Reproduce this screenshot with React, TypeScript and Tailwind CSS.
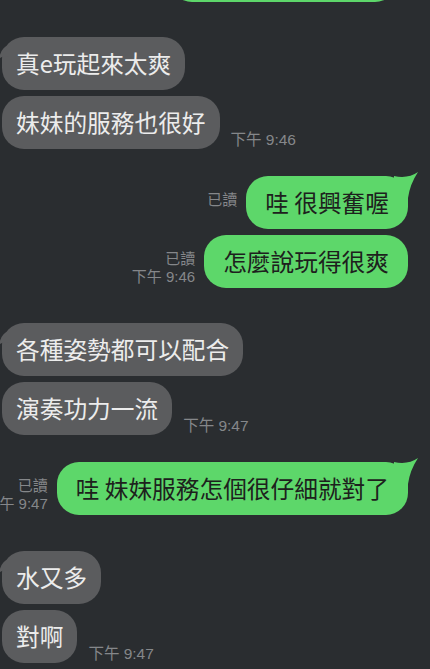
import React from "react";

const CJK = '"Noto Sans CJK TC", "Noto Sans CJK SC", sans-serif';
const META = '"Liberation Sans", "Noto Sans CJK TC", sans-serif';

function GreenTail() {
  return (
    <svg className="absolute -right-[10px] -top-[4px]" width="24" height="26" viewBox="0 0 24 26">
      <path d="M0 4 Q14 7 24 0 Q16 12 14 26 L0 26 Z" fill="#5dd76a" />
    </svg>
  );
}

function GrayTail() {
  return (
    <svg className="absolute -left-[3px] top-[8px]" width="10" height="16" viewBox="0 0 10 16">
      <path d="M10 0 Q2 2 0 14 Q4 10 10 12 Z" fill="#5b5c5e" />
    </svg>
  );
}

function Left({ text, tail }: { text: string; tail?: boolean }) {
  return (
    <div
      className="relative shrink-0 whitespace-nowrap rounded-[22px] bg-[#5b5c5e] px-[14px] py-[12px] text-[23.7px] leading-[29px] text-[#ececec]"
      style={{ fontFamily: CJK }}
    >
      {tail && <GrayTail />}
      {text}
    </div>
  );
}

function Right({ text, tail }: { text: string; tail?: boolean }) {
  return (
    <div
      className="relative shrink-0 whitespace-nowrap rounded-[22px] bg-[#5dd76a] px-[19px] py-[12px] text-[23.7px] leading-[29px] text-[#1d211d]"
      style={{ fontFamily: CJK }}
    >
      {tail && <GreenTail />}
      {text}
    </div>
  );
}

function Time({ t }: { t: string }) {
  return (
    <div
      className="shrink-0 whitespace-nowrap text-[15.5px] leading-[19px] text-[#85878a]"
      style={{ fontFamily: META }}
    >
      {t}
    </div>
  );
}

function Receipt({ t }: { t?: string }) {
  return (
    <div
      className="flex shrink-0 flex-col items-end whitespace-nowrap pb-[2px] text-[15px] leading-[18px] text-[#85878a]"
      style={{ fontFamily: META }}
    >
      <span>已讀</span>
      <span className={t ? "" : "invisible"}>{t ?? "下午 9:46"}</span>
    </div>
  );
}

export default function App() {
  return (
    <div className="flex h-[669px] w-[430px] flex-col overflow-hidden bg-[#2a2d30]">
      <div className="flex justify-end pr-[33px]">
        <div className="-mt-[51px] h-[53px] w-[227px] rounded-[22px] bg-[#5dd76a]" />
      </div>

      <div className="mt-[35px] flex flex-col gap-[6px] pl-[2px]">
        <div className="flex items-end">
          <Left text="真e玩起來太爽" tail />
        </div>
        <div className="flex items-end gap-[11px]">
          <Left text="妹妹的服務也很好" />
          <Time t="下午 9:46" />
        </div>
      </div>

      <div className="mt-[27px] flex flex-col gap-[6px] pr-[22px]">
        <div className="flex items-end justify-end gap-[9px]">
          <Receipt />
          <Right text="哇 很興奮喔" tail />
        </div>
        <div className="flex items-end justify-end gap-[9px]">
          <Receipt t="下午 9:46" />
          <Right text="怎麼說玩得很爽" />
        </div>
      </div>

      <div className="mt-[35px] flex flex-col gap-[6px] pl-[2px]">
        <div className="flex items-end">
          <Left text="各種姿勢都可以配合" tail />
        </div>
        <div className="flex items-end gap-[11px]">
          <Left text="演奏功力一流" />
          <Time t="下午 9:47" />
        </div>
      </div>

      <div className="mt-[27px] flex flex-col pr-[22px]">
        <div className="flex items-end justify-end gap-[9px]">
          <Receipt t="下午 9:47" />
          <Right text="哇 妹妹服務怎個很仔細就對了" tail />
        </div>
      </div>

      <div className="mt-[36px] flex flex-col gap-[6px] pl-[2px]">
        <div className="flex items-end">
          <Left text="水又多" tail />
        </div>
        <div className="flex items-end gap-[11px]">
          <Left text="對啊" />
          <Time t="下午 9:47" />
        </div>
      </div>
    </div>
  );
}
